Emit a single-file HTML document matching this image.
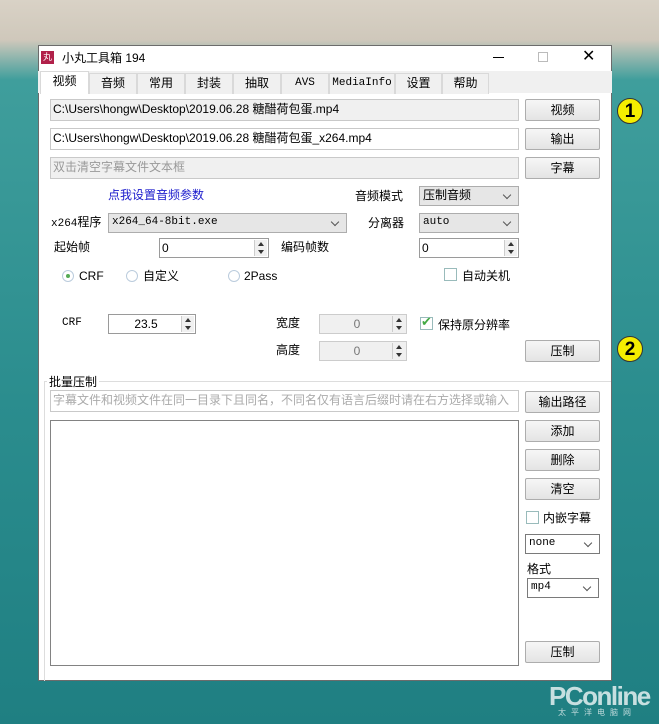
<!DOCTYPE html>
<html><head><meta charset="utf-8"><style>
*{box-sizing:border-box;margin:0;padding:0}
body{width:659px;height:724px;overflow:hidden;position:relative;font-family:"Liberation Sans","Noto Sans CJK SC",sans-serif;font-size:12px;color:#000;
background:linear-gradient(180deg,#d9d2c6 0px,#cfc8bb 40px,#3f9e9c 80px,#2b8d8e 400px,#1f7f82 724px);}
.a{position:absolute;white-space:nowrap;line-height:16px}
.win{position:absolute;left:38px;top:45px;width:574px;height:636px;background:#fff;border:1px solid #6b6b6b}
.tabs{position:absolute;left:38px;top:71px;width:574px;height:22px;background:#f0f0f0}
.tab{position:absolute;top:73px;height:21px;border:1px solid #d9d9d9;border-bottom:none;background:#f0f0f0;text-align:center;line-height:19px;font-size:12px}
.inp{position:absolute;border:1px solid #c9c9c9;background:#fff;line-height:19px;padding-left:2px;font-size:12px;white-space:nowrap;overflow:hidden}
.ro{background:#f0f0f0}
.btn{position:absolute;border:1px solid #adadad;border-radius:2px;background:linear-gradient(#f6f6f6,#e4e4e4);text-align:center;line-height:20px;font-size:12px}
.cmb{position:absolute;border:1px solid #adadad;background:#e6e6e6;line-height:17px;padding-left:3px;font-size:11px;white-space:nowrap}
.cmb.w{background:#fff;border-color:#7a7a7a}
.cmb:after{content:"";position:absolute;right:8px;top:5px;width:5px;height:5px;border-right:1px solid #555;border-bottom:1px solid #555;transform:rotate(45deg)}
.mono{font-family:"Liberation Mono",monospace}
.spin{position:absolute;border:1px solid #9a9a9a;background:#fff;line-height:18px;padding-left:2px;font-size:12px}
.spin.d{background:#f0f0f0;border-color:#ccc;color:#777;text-align:center;padding-right:14px}
.spin b{position:absolute;right:1px;top:1px;width:13px;height:16px;border-left:1px solid #ccc;background:#f0f0f0}
.spin b:before{content:"";position:absolute;left:3px;top:2px;border:3px solid transparent;border-bottom:4px solid #333;border-top:none}
.spin b:after{content:"";position:absolute;left:3px;top:10px;border:3px solid transparent;border-top:4px solid #333;border-bottom:none}
.rad{position:absolute;width:12px;height:12px;border:1px solid #bcd;border-radius:50%;background:#fff}
.chk{position:absolute;width:13px;height:13px;border:1px solid #9bb;background:#fff}
.mark{position:absolute;width:26px;height:26px;border-radius:50%;background:#f5ee00;border:1px solid #333;text-align:center;font:bold 19px/25px "Liberation Sans",sans-serif}
</style></head><body>
<div class="win"></div>
<div class="a" style="left:41px;top:51px;width:13px;height:13px;background:#b1214a;color:#fff;font-size:9px;line-height:13px;text-align:center">丸</div>
<div class="a" style="left:62px;top:50px;font-size:12px">小丸工具箱 194</div>
<div class="a" style="left:493px;top:57px;width:11px;height:1px;background:#000"></div>
<div class="a" style="left:538px;top:52px;width:10px;height:10px;border:1px solid #bbb"></div>
<div class="a" style="left:582px;top:49px;font-size:16px;font-weight:300">✕</div>
<div class="tabs"></div>
<div class="tab" style="left:40px;top:71px;width:49px;height:23px;background:#fff">视频</div>
<div class="tab" style="left:89px;width:48px">音频</div>
<div class="tab" style="left:137px;width:48px">常用</div>
<div class="tab" style="left:185px;width:48px">封装</div>
<div class="tab" style="left:233px;width:48px">抽取</div>
<div class="tab mono" style="left:281px;width:48px;font-size:11px">AVS</div>
<div class="tab mono" style="left:329px;width:66px;font-size:11px">MediaInfo</div>
<div class="tab" style="left:395px;width:47px">设置</div>
<div class="tab" style="left:442px;width:47px">帮助</div>

<div class="inp ro" style="left:50px;top:99px;width:469px;height:22px">C:\Users\hongw\Desktop\2019.06.28 糖醋荷包蛋.mp4</div>
<div class="inp" style="left:50px;top:128px;width:469px;height:22px">C:\Users\hongw\Desktop\2019.06.28 糖醋荷包蛋_x264.mp4</div>
<div class="inp ro" style="left:50px;top:157px;width:469px;height:22px;color:#999">双击清空字幕文件文本框</div>
<div class="btn" style="left:525px;top:99px;width:75px;height:22px">视频</div>
<div class="btn" style="left:525px;top:128px;width:75px;height:22px">输出</div>
<div class="btn" style="left:525px;top:157px;width:75px;height:22px">字幕</div>

<div class="a" style="left:108px;top:187px;color:#1a1acc">点我设置音频参数</div>
<div class="a" style="left:355px;top:188px">音频模式</div>
<div class="cmb" style="left:419px;top:186px;width:100px;height:20px;font-size:12px">压制音频</div>
<div class="a" style="left:51px;top:214px"><span class="mono" style="font-size:11px">x264</span>程序</div>
<div class="cmb mono" style="left:108px;top:213px;width:239px;height:20px">x264_64-8bit.exe</div>
<div class="a" style="left:368px;top:215px">分离器</div>
<div class="cmb mono" style="left:419px;top:213px;width:100px;height:20px">auto</div>
<div class="a" style="left:54px;top:239px">起始帧</div>
<div class="spin" style="left:159px;top:238px;width:110px;height:20px">0<b></b></div>
<div class="a" style="left:281px;top:239px">编码帧数</div>
<div class="spin" style="left:419px;top:238px;width:100px;height:20px">0<b></b></div>

<div class="rad" style="left:62px;top:270px"></div><div class="a" style="left:66px;top:274px;width:4px;height:4px;border-radius:50%;background:#5a5"></div>
<div class="a" style="left:79px;top:268px">CRF</div>
<div class="rad" style="left:126px;top:270px"></div><div class="a" style="left:143px;top:268px">自定义</div>
<div class="rad" style="left:228px;top:270px"></div><div class="a" style="left:244px;top:268px">2Pass</div>
<div class="chk" style="left:444px;top:268px"></div><div class="a" style="left:462px;top:268px">自动关机</div>

<div class="a mono" style="left:62px;top:315px;font-size:11px">CRF</div>
<div class="spin" style="left:108px;top:314px;width:88px;height:20px;text-align:center;padding-right:14px">23.5<b></b></div>
<div class="a" style="left:276px;top:315px">宽度</div>
<div class="spin d" style="left:319px;top:314px;width:88px;height:20px">0<b></b></div>
<div class="a" style="left:276px;top:342px">高度</div>
<div class="spin d" style="left:319px;top:341px;width:88px;height:20px">0<b></b></div>
<div class="chk" style="left:420px;top:317px"></div><div class="a" style="left:421px;top:314px;color:#4a4;font-size:13px">✔</div>
<div class="a" style="left:438px;top:317px">保持原分辨率</div>
<div class="btn" style="left:525px;top:340px;width:75px;height:22px">压制</div>

<div class="a" style="left:44px;top:381px;width:567px;height:300px;border-top:1px solid #ddd;border-left:1px solid #ddd"></div>
<div class="a" style="left:47px;top:374px;background:#fff;padding:0 2px">批量压制</div>
<div class="inp" style="left:50px;top:390px;width:469px;height:22px;color:#aaa">字幕文件和视频文件在同一目录下且同名，不同名仅有语言后缀时请在右方选择或输入</div>
<div class="btn" style="left:525px;top:391px;width:75px;height:22px">输出路径</div>
<div class="a" style="left:50px;top:420px;width:469px;height:246px;border:1px solid #828282;background:#fff"></div>
<div class="btn" style="left:525px;top:420px;width:75px;height:22px">添加</div>
<div class="btn" style="left:525px;top:449px;width:75px;height:22px">删除</div>
<div class="btn" style="left:525px;top:478px;width:75px;height:22px">清空</div>
<div class="chk" style="left:526px;top:511px"></div><div class="a" style="left:543px;top:510px">内嵌字幕</div>
<div class="cmb w mono" style="left:525px;top:534px;width:75px;height:20px">none</div>
<div class="a" style="left:527px;top:561px">格式</div>
<div class="cmb w mono" style="left:527px;top:578px;width:72px;height:20px">mp4</div>
<div class="btn" style="left:525px;top:641px;width:75px;height:22px">压制</div>

<div class="mark" style="left:617px;top:98px">1</div>
<div class="mark" style="left:617px;top:336px">2</div>
<div class="a" style="left:549px;top:682px;color:rgba(255,255,255,.75);font:bold 26px/28px 'Liberation Sans',sans-serif;letter-spacing:-1.5px">PConline</div>
<div class="a" style="left:558px;top:708px;color:rgba(255,255,255,.7);font-size:8px;line-height:10px;letter-spacing:5px">太平洋电脑网</div>
</body></html>
